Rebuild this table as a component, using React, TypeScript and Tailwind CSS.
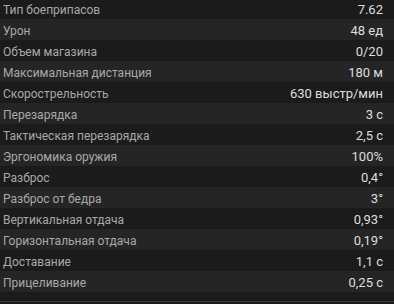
const stats: [string, string][] = [
  ["Тип боеприпасов", "7.62"],
  ["Урон", "48 ед"],
  ["Объем магазина", "0/20"],
  ["Максимальная дистанция", "180 м"],
  ["Скорострельность", "630 выстр/мин"],
  ["Перезарядка", "3 с"],
  ["Тактическая перезарядка", "2,5 с"],
  ["Эргономика оружия", "100%"],
  ["Разброс", "0,4°"],
  ["Разброс от бедра", "3°"],
  ["Вертикальная отдача", "0,93°"],
  ["Горизонтальная отдача", "0,19°"],
  ["Доставание", "1,1 с"],
  ["Прицеливание", "0,25 с"],
];

export default function App() {
  return (
    <div className="w-[394px] h-[304px] overflow-hidden bg-[#1b1b1b] font-['Roboto',sans-serif]">
      <div className="-mt-[2px]">
        {stats.map(([label, value], i) => (
          <div
            key={label}
            className={`flex h-[21px] items-center justify-between pl-[3px] pr-[11px] pt-[3px] ${i % 2 ? "bg-[#252525]" : "bg-[#1b1b1b]"}`}
          >
            <span className="text-[12px] text-[#a9a9a9]">{label}</span>
            <span className="text-[13px] text-[#dedede]">{value}</span>
          </div>
        ))}
      </div>
      <div className="mt-[9px] h-px bg-[#3c3c3c]" />
    </div>
  );
}
